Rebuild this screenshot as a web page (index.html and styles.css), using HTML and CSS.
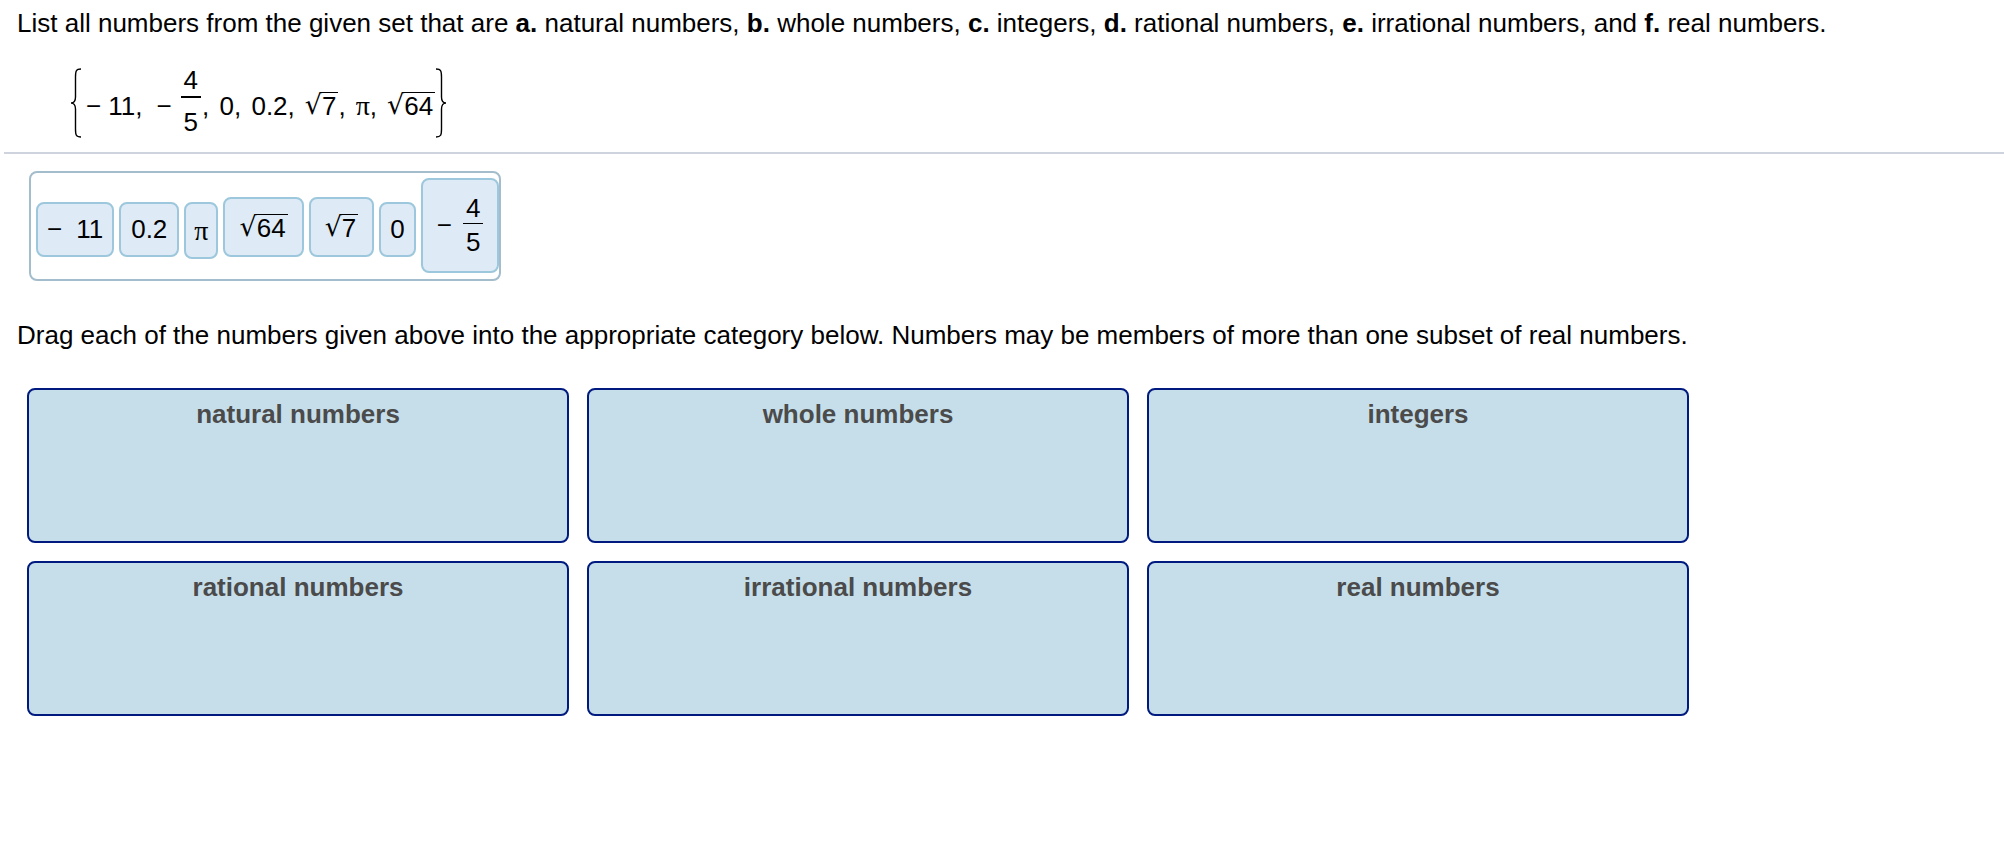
FILE: index.html
```html
<!DOCTYPE html>
<html lang="en">
<head>
<meta charset="utf-8">
<title>Number sets</title>
<link rel="stylesheet" href="styles.css">
</head>
<body>
<div class="question">
  <p class="prompt">List all numbers from the given set that are <b>a.</b> natural numbers, <b>b.</b> whole numbers, <b>c.</b> integers, <b>d.</b> rational numbers, <b>e.</b> irrational numbers, and <b>f.</b> real numbers.</p>
  <div class="set">
    <svg class="brace" width="12" height="70" viewBox="0 0 12 70"><path d="M11 1 C6 1 5.5 3 5.5 9 L5.5 29 C5.5 33 3.5 35 1 35 C3.5 35 5.5 37 5.5 41 L5.5 61 C5.5 67 6 69 11 69" fill="none" stroke="#000" stroke-width="1.4"/></svg>
    <span class="m minus first">−</span><span class="m">11,</span>
    <span class="m minus gap">−</span>
    <span class="frac"><span class="num">4</span><span class="bar"></span><span class="den">5</span></span>
    <span class="m">, 0, 0.2,</span>
    <span class="sqrt"><span class="rsym">√</span><span class="radicand">7</span></span>
    <span class="m">,</span>
    <span class="m pi">π</span><span class="m">,</span>
    <span class="sqrt"><span class="rsym">√</span><span class="radicand">64</span></span>
    <svg class="brace" width="12" height="70" viewBox="0 0 12 70"><path d="M1 1 C6 1 6.5 3 6.5 9 L6.5 29 C6.5 33 8.5 35 11 35 C8.5 35 6.5 37 6.5 41 L6.5 61 C6.5 67 6 69 1 69" fill="none" stroke="#000" stroke-width="1.4"/></svg>
  </div>
</div>
<hr class="rule">
<div class="work">
  <div class="tray">
    <div class="tok tok-neg">−<span class="sp"></span>11</div>
    <div class="tok tok-dec">0.2</div>
    <div class="tok tok-pi">π</div>
    <div class="tok tok-rad"><span class="sqrt"><span class="rsym">√</span><span class="radicand">64</span></span></div>
    <div class="tok tok-rad"><span class="sqrt"><span class="rsym">√</span><span class="radicand">7</span></span></div>
    <div class="tok">0</div>
    <div class="tok tok-frac"><span class="tminus">−</span><span class="frac tfrac"><span class="num">4</span><span class="bar"></span><span class="den">5</span></span></div>
  </div>
  <p class="instr">Drag each of the numbers given above into the appropriate category below. Numbers may be members of more than one subset of real numbers.</p>
  <div class="cats">
    <div class="cat">natural numbers</div>
    <div class="cat">whole numbers</div>
    <div class="cat">integers</div>
    <div class="cat">rational numbers</div>
    <div class="cat">irrational numbers</div>
    <div class="cat">real numbers</div>
  </div>
</div>
</body>
</html>
```

FILE: styles.css
```css
html, body {
  margin: 0;
  padding: 0;
  background: #fff;
}
body {
  font-family: "Liberation Sans", Arial, sans-serif;
  color: #000;
  padding-top: 8px;
}
.question {
  padding-left: 17px;
}
.prompt {
  margin: 0;
  font-size: 26px;
  line-height: 30px;
  white-space: nowrap;
}
.set {
  display: flex;
  align-items: center;
  height: 70px;
  margin: 30px 0 0 53px;
  font-size: 26px;
  line-height: 30px;
}
.brace {
  display: block;
  flex: none;
}
.m {
  white-space: pre;
  margin-top: 6px;
  word-spacing: 3px;
}
.minus {
  margin-left: 6px;
  margin-right: 7px;
}
.minus.first {
  margin-left: 4px;
}
.minus.gap {
  margin-left: 14px;
  margin-right: 5px;
}
.pi {
  font-family: "Liberation Serif", serif;
  font-size: 28px;
  margin-left: 10px;
}
.frac {
  display: inline-flex;
  flex-direction: column;
  align-items: center;
  margin: 0 1px 0 4px;
  position: relative;
  top: -2px;
}
.num, .den {
  line-height: 24px;
  padding: 0 3px;
}
.bar {
  align-self: stretch;
  height: 1.5px;
  background: #000;
  margin-top: 4px;
}
.den {
  margin-top: 12px;
}
.sqrt {
  display: inline-flex;
  align-items: flex-start;
  margin-left: 10px;
  margin-top: 4px;
}
.rsym {
  font-family: "DejaVu Sans", sans-serif;
  line-height: 1;
  font-size: 27px;
  margin-right: -1px;
}
.radicand {
  border-top: 1.5px solid #000;
  line-height: 27px;
  padding: 0 2px 0 1px;
  margin-top: 1px;
}
.rule {
  border: 0;
  height: 2px;
  background: #cfd3de;
  margin: 14px 0 0 4px;
}
.work {
  padding-left: 17px;
}
.tray {
  display: flex;
  align-items: center;
  gap: 5px;
  box-sizing: border-box;
  width: 472px;
  height: 110px;
  margin: 17px 0 0 12px;
  padding: 6px 5px 0;
  border: 2px solid #a3bdcc;
  border-radius: 8px;
}
.tok {
  box-sizing: border-box;
  display: flex;
  align-items: center;
  justify-content: center;
  height: 55px;
  padding: 0 9px;
  background: #deebf6;
  border: 2px solid #9cc7dc;
  border-radius: 8px;
  font-size: 26px;
  white-space: pre;
}
.sp {
  display: inline-block;
  width: 14px;
}
.tok-dec {
  padding: 0 10px;
}
.tok-pi {
  font-family: "Liberation Serif", serif;
  font-size: 28px;
  height: 57px;
  margin-top: 3px;
  padding: 0 8px;
}
.tok-rad {
  height: 60px;
  margin-bottom: 4px;
  padding: 0 14px;
}
.tok-rad .sqrt {
  margin: 0;
}
.tok-frac {
  height: 95px;
  margin-bottom: 8px;
  padding: 0 14px;
}
.tminus {
  margin-right: 11px;
}
.tfrac {
  margin: 0;
  top: 0;
}
.tfrac .bar {
  margin-top: 3px;
}
.tfrac .den {
  margin-top: 6px;
}
.instr {
  margin: 39px 0 0 0;
  font-size: 26px;
  line-height: 30px;
  white-space: nowrap;
}
.cats {
  display: grid;
  grid-template-columns: repeat(3, 542px);
  grid-auto-rows: 155px;
  gap: 18px;
  margin: 38px 0 0 10px;
}
.cat {
  box-sizing: border-box;
  border: 2px solid #001a80;
  border-radius: 8px;
  background: #c6deea;
  color: #4b4b4b;
  font-weight: bold;
  font-size: 26px;
  line-height: 30px;
  text-align: center;
  padding-top: 9px;
}
```
